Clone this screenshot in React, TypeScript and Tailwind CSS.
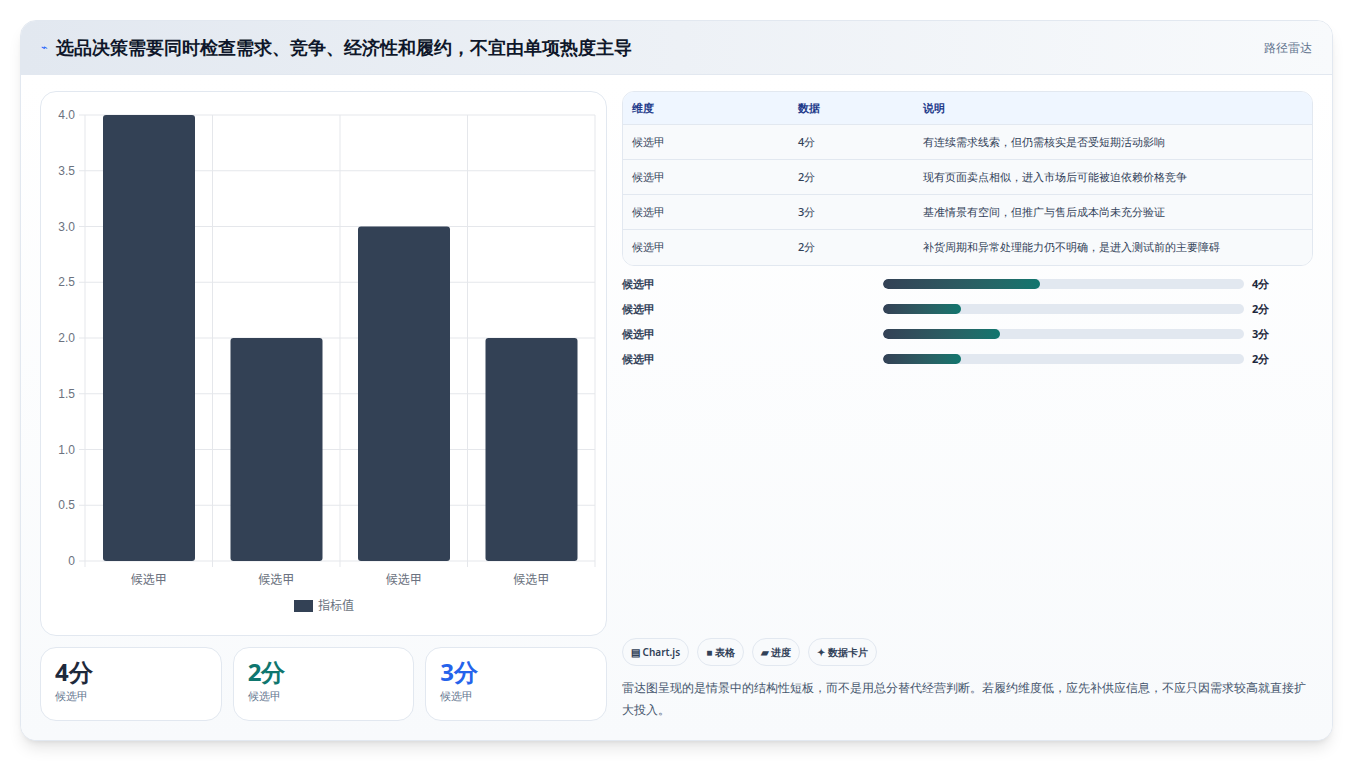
import React from 'react';

const rows = [
    { name: '候选甲', score: '4分', note: '有连续需求线索，但仍需核实是否受短期活动影响' },
    { name: '候选甲', score: '2分', note: '现有页面卖点相似，进入市场后可能被迫依赖价格竞争' },
    { name: '候选甲', score: '3分', note: '基准情景有空间，但推广与售后成本尚未充分验证' },
    { name: '候选甲', score: '2分', note: '补货周期和异常处理能力仍不明确，是进入测试前的主要障碍' },
];

const values = [4, 2, 3, 2];
const ticks = ['4.0', '3.5', '3.0', '2.5', '2.0', '1.5', '1.0', '0.5', '0'];

// Bar chart drawn in SVG, sized like the canvas in the screenshot
const BarChart: React.FC = () => {
    const x0 = 44, x1 = 554, y0 = 23, y1 = 469;
    const h = y1 - y0;
    const cw = (x1 - x0) / 4;
    return (
        <svg width="566" height="544" viewBox="0 0 566 544" className="block">
            {ticks.map((t, i) => {
                const y = y0 + (h / 8) * i;
                return (
                    <g key={t}>
                        <line x1={x0 - 6} x2={x1} y1={y} y2={y} stroke="#e5e7eb" />
                        <text x={x0 - 10} y={y + 4} textAnchor="end" fontSize="12" fill="#6b7280" fontFamily="Liberation Sans, sans-serif">{t}</text>
                    </g>
                );
            })}
            {[0, 1, 2, 3, 4].map(i => (
                <line key={i} x1={x0 + cw * i} x2={x0 + cw * i} y1={y0} y2={y1 + 6} stroke="#e5e7eb" />
            ))}
            {values.map((v, i) => {
                const bh = (v / 4) * h;
                return (
                    <g key={i}>
                        <rect x={x0 + cw * i + 18} y={y1 - bh} width={92} height={bh} rx="3" fill="#334155" />
                        <text x={x0 + cw * i + cw / 2} y={y1 + 23} textAnchor="middle" fontSize="12" fill="#6b7280" fontFamily="Noto Sans CJK SC, sans-serif">候选甲</text>
                    </g>
                );
            })}
            <rect x="253" y="508" width="19" height="12" fill="#334155" />
            <text x="277" y="518" fontSize="12" fill="#6b7280" fontFamily="Noto Sans CJK SC, sans-serif">指标值</text>
        </svg>
    );
};

export default function App() {
    return (
        <div className="min-h-[761px] bg-white p-5 pt-5 font-['Noto_Sans_CJK_SC',sans-serif]">
            <div className="w-[1313px] h-[721px] rounded-2xl border border-slate-200 bg-white shadow-lg overflow-hidden flex flex-col">
                {/* Header */}
                <div className="h-[56px] flex items-center justify-between px-5 bg-gradient-to-r from-[#e2e8f0] to-[#f8fafc] border-b border-slate-200">
                    <div className="flex items-center gap-2">
                        <span className="text-[11px] text-blue-600">⌁</span>
                        <h1 className="text-[18px] font-bold text-[#0f172a]">选品决策需要同时检查需求、竞争、经济性和履约，不宜由单项热度主导</h1>
                    </div>
                    <span className="text-[12px] text-slate-500">路径雷达</span>
                </div>

                {/* Body */}
                <div className="flex-1 flex gap-[15px] p-[19px] pt-4 bg-gradient-to-b from-white to-[#f8fafc]">
                    <div className="w-[567px] flex flex-col gap-[11px]">
                        <div className="h-[545px] rounded-2xl border border-slate-200 bg-white overflow-hidden">
                            <BarChart />
                        </div>
                        <div className="flex gap-[11px]">
                            {[
                                { v: '4分', c: 'text-[#1e293b]' },
                                { v: '2分', c: 'text-[#0f766e]' },
                                { v: '3分', c: 'text-[#2563eb]' },
                            ].map((s, i) => (
                                <div key={i} className="flex-1 h-[74px] rounded-2xl border border-slate-200 bg-white px-[14px] pt-2">
                                    <div className={`text-[24px] font-bold leading-[32px] ${s.c}`}>{s.v}</div>
                                    <div className="text-[11px] text-slate-500">候选甲</div>
                                </div>
                            ))}
                        </div>
                    </div>

                    <div className="flex-1 flex flex-col">
                        <div className="rounded-xl border border-slate-200 overflow-hidden text-[11px]">
                            <div className="flex h-[33px] items-center bg-[#eff6ff] text-[#1e3a8a] font-semibold border-b border-slate-200 px-[9px]">
                                <span className="w-[166px]">维度</span>
                                <span className="w-[125px]">数据</span>
                                <span>说明</span>
                            </div>
                            {rows.map((r, i) => (
                                <div key={i} className={`flex h-[35px] items-center px-[9px] text-slate-700 font-medium bg-[#f8fafc] ${i < 3 ? 'border-b border-slate-200' : ''}`}>
                                    <span className="w-[166px]">{r.name}</span>
                                    <span className="w-[125px]">{r.score}</span>
                                    <span>{r.note}</span>
                                </div>
                            ))}
                        </div>

                        <div className="mt-[10px] flex flex-col gap-[9px] text-[11px] font-semibold text-slate-700">
                            {[43.5, 21.7, 32.5, 21.7].map((p, i) => (
                                <div key={i} className="flex items-center h-[16px]">
                                    <span className="w-[261px]">候选甲</span>
                                    <div className="w-[361px] h-[10px] rounded-full bg-[#e2e8f0] overflow-hidden">
                                        <div className="h-full rounded-full bg-gradient-to-r from-[#334155] to-[#0f766e]" style={{ width: `${p}%` }} />
                                    </div>
                                    <span className="ml-2 text-slate-800 font-bold">{rows[i].score}</span>
                                </div>
                            ))}
                        </div>

                        <div className="mt-auto">
                            <div className="flex gap-2 text-[10px] font-semibold text-slate-700">
                                {['▤ Chart.js', '■ 表格', '▰ 进度', '✦ 数据卡片'].map(t => (
                                    <span key={t} className="h-[28px] flex items-center px-[8px] rounded-full border border-slate-200 bg-[#f8fafc]">{t}</span>
                                ))}
                            </div>
                            <p className="mt-[11px] text-[12px] leading-[22px] text-slate-600">
                                雷达图呈现的是情景中的结构性短板，而不是用总分替代经营判断。若履约维度低，应先补供应信息，不应只因需求较高就直接扩大投入。
                            </p>
                        </div>
                    </div>
                </div>
            </div>
        </div>
    );
}
